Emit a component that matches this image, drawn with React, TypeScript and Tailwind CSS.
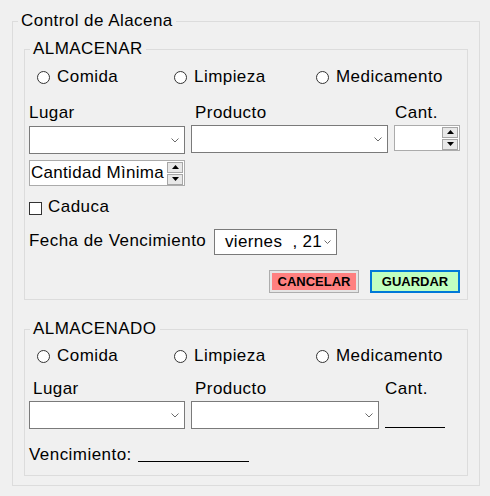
import React from "react";

const Chevron = () => (
  <svg width="8" height="5" viewBox="0 0 8 5">
    <polyline points="0.5,0.5 4,4 7.5,0.5" fill="none" stroke="#6b6b6b" strokeWidth="1" />
  </svg>
);

const Spinner = () => (
  <div className="flex flex-col gap-[1px] py-[1px] mr-[1px]">
    <div className="w-[16px] h-[11px] border border-[#a6a6a6] bg-[#e8e8e8] flex items-center justify-center">
      <svg width="7" height="4" viewBox="0 0 7 4">
        <polygon points="3.5,0 7,4 0,4" fill="#000" />
      </svg>
    </div>
    <div className="w-[16px] h-[11px] border border-[#a6a6a6] bg-[#e8e8e8] flex items-center justify-center">
      <svg width="7" height="4" viewBox="0 0 7 4">
        <polygon points="0,0 7,0 3.5,4" fill="#000" />
      </svg>
    </div>
  </div>
);

const Radio = ({ label, className }: { label: string; className: string }) => (
  <div className={className}>
    <div className="flex items-center gap-[7px] h-[20px]">
      <div className="w-[13px] h-[13px] rounded-full border border-[#333333] bg-white" />
      <span>{label}</span>
    </div>
  </div>
);

const Radios = ({ className }: { className: string }) => (
  <div className={className}>
    <Radio label="Comida" className="w-[137px]" />
    <Radio label="Limpieza" className="w-[142px]" />
    <Radio label="Medicamento" className="" />
  </div>
);

export default function App() {
  return (
    <div className="w-[490px] h-[496px] bg-[#f0f0f0] pt-[11px] pl-[12px] font-['Liberation_Sans',Arial,sans-serif] text-[17px] leading-[20px] tracking-[0.45px] text-black">
      <fieldset className="w-[468px] h-[475px] border border-[#dcdcdc] m-0 p-0 min-w-0">
        <legend className="ml-[5px] px-[3px] leading-[20px]">Control de Alacena</legend>

        {/* ALMACENAR */}
        <fieldset className="ml-[11px] mt-[8px] w-[444px] h-[261px] border border-[#dcdcdc] m-0 p-0 min-w-0">
          <legend className="ml-[5px] px-[3px] leading-[20px]">ALMACENAR</legend>
          <div className="pl-[4px] pr-[7px] flex flex-col">
            <Radios className="mt-[8px] ml-[8px] flex h-[20px]" />

            <div className="mt-[16px] flex h-[20px]">
              <span className="w-[166px]">Lugar</span>
              <span className="w-[200px]">Producto</span>
              <span>Cant.</span>
            </div>

            <div className="mt-[2px] flex items-start h-[29px]">
              <div className="mt-[1px] w-[156px] h-[28px] bg-white border border-[#7a7a7a] flex items-center justify-end pr-[5px]">
                <Chevron />
              </div>
              <div className="ml-[6px] w-[198px] h-[28px] bg-white border border-[#7a7a7a] flex items-center justify-end pr-[5px]">
                <Chevron />
              </div>
              <div className="ml-[6px] w-[66px] h-[26px] bg-white border border-[#ababab] flex items-center justify-end">
                <Spinner />
              </div>
            </div>

            <div className="mt-[6px] w-[156px] h-[26px] bg-white border border-[#ababab] flex items-center justify-between">
              <span className="pl-[1px] whitespace-nowrap tracking-[0.3px]">Cantidad Mìnima</span>
              <Spinner />
            </div>

            <div className="mt-[11px] flex items-start h-[20px]">
              <div className="mt-[5px] w-[13px] h-[13px] border border-[#333333] bg-white" />
              <span className="ml-[6px]">Caduca</span>
            </div>

            <div className="mt-[12px] flex items-start h-[26px]">
              <span className="mt-[2px] w-[185px] whitespace-nowrap">Fecha de Vencimiento</span>
              <div className="w-[123px] h-[26px] bg-white border border-[#7a7a7a] flex items-center pl-[10px] pr-[5px]">
                <span className="whitespace-pre flex-1 tracking-[0.35px]">viernes  , 21</span>
                <svg width="7" height="4" viewBox="0 0 7 4">
                  <polyline points="0.5,0.5 3.5,3.5 6.5,0.5" fill="none" stroke="#6b6b6b" strokeWidth="1" />
                </svg>
              </div>
            </div>

            <div className="mt-[15px] flex justify-end gap-[11px] tracking-normal">
              <div className="w-[90px] h-[23px] border border-[#adadad] bg-[#e5e5e5] p-[2px]">
                <div className="w-full h-full bg-[#ff8080] flex items-center justify-center text-[13px] font-bold leading-none">
                  CANCELAR
                </div>
              </div>
              <div className="w-[90px] h-[23px] border-2 border-[#0078d7] bg-[#c0ffc0] flex items-center justify-center text-[13px] font-bold leading-none">
                GUARDAR
              </div>
            </div>
          </div>
        </fieldset>

        {/* ALMACENADO */}
        <fieldset className="ml-[11px] mt-[19px] w-[444px] h-[157px] border border-[#dcdcdc] m-0 p-0 min-w-0">
          <legend className="ml-[5px] px-[3px] leading-[20px]">ALMACENADO</legend>
          <div className="pl-[4px] flex flex-col">
            <Radios className="mt-[7px] ml-[8px] flex h-[20px]" />

            <div className="mt-[13px] flex h-[20px]">
              <span className="ml-[4px] w-[162px]">Lugar</span>
              <span className="w-[190px]">Producto</span>
              <span>Cant.</span>
            </div>

            <div className="mt-[2px] flex items-start h-[28px]">
              <div className="w-[156px] h-[28px] bg-white border border-[#7a7a7a] flex items-center justify-end pr-[5px]">
                <Chevron />
              </div>
              <div className="ml-[6px] w-[188px] h-[28px] bg-white border border-[#7a7a7a] flex items-center justify-end pr-[5px]">
                <Chevron />
              </div>
              <div className="ml-[6px] w-[60px] h-[27px] border-b border-black" />
            </div>

            <div className="mt-[16px] flex items-start h-[20px]">
              <span className="w-[109px] whitespace-nowrap">Vencimiento:</span>
              <div className="w-[111px] h-[17px] border-b border-black" />
            </div>
          </div>
        </fieldset>
      </fieldset>
    </div>
  );
}
